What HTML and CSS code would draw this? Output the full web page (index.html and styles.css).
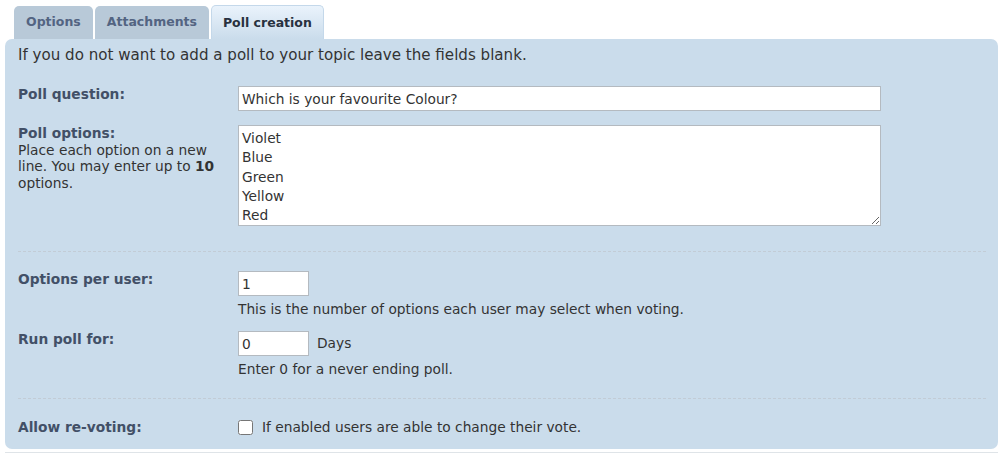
FILE: index.html
```html
<!DOCTYPE html>
<html lang="en">
<head>
  <meta charset="UTF-8">
  <title>Poll creation</title>
  <link rel="stylesheet" href="styles.css">
</head>
<body>
  <div class="wrap">
    <ul class="tabs">
      <li class="tab"><a href="#">Options</a></li>
      <li class="tab"><a href="#">Attachments</a></li>
      <li class="tab active"><a href="#">Poll creation</a></li>
    </ul>

    <div class="panel">
      <p class="intro">If you do not want to add a poll to your topic leave the fields blank.</p>

      <dl class="row row-question">
        <dt><label for="poll_title">Poll question:</label></dt>
        <dd><input type="text" id="poll_title" class="inputbox wide" value="Which is your favourite Colour?"></dd>
      </dl>

      <dl class="row row-options">
        <dt>
          <label for="poll_option_text">Poll options:</label>
          <span class="explain">Place each option on a new line. You may enter up to <strong>10</strong> options.</span>
        </dt>
        <dd><textarea id="poll_option_text" class="inputbox wide">Violet
Blue
Green
Yellow
Red</textarea></dd>
      </dl>

      <hr class="dashed">

      <dl class="row">
        <dt><label for="poll_max_options">Options per user:</label></dt>
        <dd>
          <input type="number" id="poll_max_options" class="inputbox short" value="1">
          <p class="hint">This is the number of options each user may select when voting.</p>
        </dd>
      </dl>

      <dl class="row row-length">
        <dt><label for="poll_length">Run poll for:</label></dt>
        <dd>
          <div class="inline">
            <input type="text" id="poll_length" class="inputbox short" value="0">
            <span>Days</span>
          </div>
          <p class="hint">Enter 0 for a never ending poll.</p>
        </dd>
      </dl>

      <hr class="dashed">

      <dl class="row row-vote">
        <dt><label for="poll_vote_change">Allow re-voting:</label></dt>
        <dd class="inline">
          <input type="checkbox" id="poll_vote_change">
          <span>If enabled users are able to change their vote.</span>
        </dd>
      </dl>
    </div>

    <div class="next-panel"></div>
  </div>
</body>
</html>
```

FILE: styles.css
```css
body {
  margin: 0;
  background: #ffffff;
  font-family: "DejaVu Sans", Verdana, sans-serif;
  font-size: 13.75px;
  line-height: 1.2;
  color: #333333;
}
.wrap {
  padding: 5px 5px 0 5px;
}
.tabs {
  list-style: none;
  margin: 0 0 0 9px;
  padding: 0;
  display: flex;
  align-items: flex-end;
  gap: 2px;
  height: 34px;
}
.tab a {
  display: block;
  height: 33px;
  line-height: 31px;
  padding: 0 12px;
  background: #b8c9d8;
  color: #536482;
  font-size: 12.5px;
  font-weight: bold;
  text-decoration: none;
  border-radius: 5px 5px 0 0;
  box-sizing: border-box;
}
.tab.active a {
  height: 34px;
  line-height: 33px;
  color: #28313f;
  background: linear-gradient(to bottom, #eaf3fc, #cadceb);
  border: 1px solid #c4d8ea;
  border-bottom: none;
  padding: 0 11px;
}
.panel {
  background: #cadceb;
  border-radius: 7px;
  padding: 7px 12px 13.5px 13px;
}
.intro {
  margin: 0 0 22px 0;
  font-size: 15.1px;
}
.row {
  display: flex;
  margin: 0;
}
.row dt {
  width: 205px;
  margin-right: 15px;
}
.row dd {
  margin: 0;
}
.row label {
  font-weight: bold;
  color: #425067;
}
.explain {
  display: block;
}
.explain strong {
  line-height: 1;
}
.row-options {
  margin-top: 14px;
}
.row-length {
  margin-top: 13.5px;
}
.inputbox {
  display: block;
  box-sizing: border-box;
  margin: 0;
  border: 1px solid #b4bac0;
  background: #ffffff;
  color: #333333;
  font-family: inherit;
  font-size: 13.75px;
  padding: 3px 3px;
  height: 25px;
  outline: none;
}
.inputbox.wide {
  width: 643px;
}
textarea.inputbox {
  height: 101px;
  line-height: 1.4;
  padding: 3px 3px 2px 3px;
  resize: vertical;
}
.inputbox.short {
  width: 71px;
  -moz-appearance: textfield;
}
.inputbox.short::-webkit-inner-spin-button {
  -webkit-appearance: none;
}
.hint {
  margin: 5px 0 0 0;
}
.inline {
  display: flex;
  align-items: center;
  gap: 8px;
}
hr.dashed {
  border: none;
  border-top: 1px dashed #c2ccd6;
  height: 0;
  margin: 25px 0 19px 0;
}
.row-length + hr.dashed {
  margin: 20.5px 0 20px 0;
}
.row-vote dd {
  gap: 9px;
  height: 16.5px;
}
.row-vote input {
  width: 15px;
  height: 15px;
  margin: 0;
}
.next-panel {
  margin-top: 3px;
  border-top: 1px solid #dfe4e8;
  height: 4px;
}
```
